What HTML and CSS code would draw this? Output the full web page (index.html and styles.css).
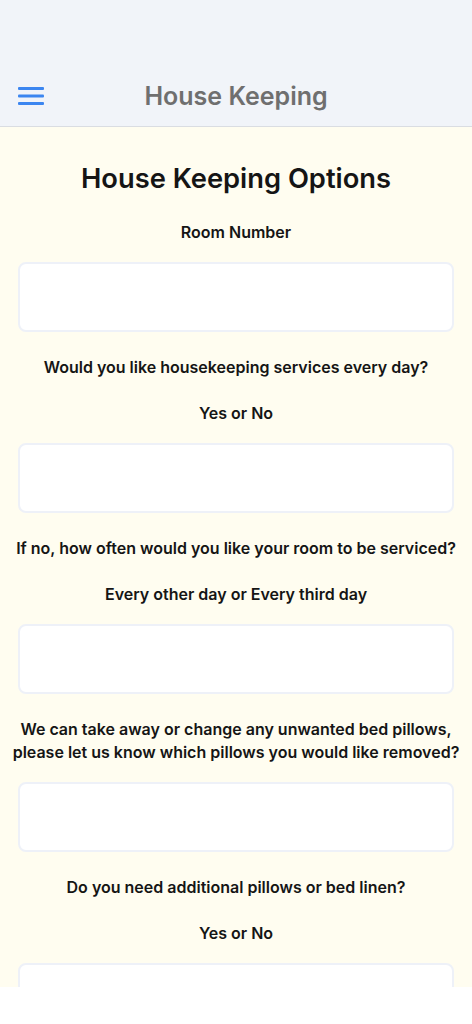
FILE: index.html
```html
<!DOCTYPE html>
<html lang="en">
<head>
    <meta charset="UTF-8">
    <meta name="viewport" content="width=device-width, initial-scale=1.0">
    <title>House Keeping</title>
    <link rel="stylesheet" href="styles.css">
</head>
<body>
    <header class="app-header">
        <div class="toolbar">
            <button class="menu-btn" aria-label="Menu">
                <svg width="28" height="22" viewBox="0 0 28 22">
                    <rect x="1" y="3" width="26" height="3" rx="1"/>
                    <rect x="1" y="10.5" width="26" height="3" rx="1"/>
                    <rect x="1" y="18" width="26" height="3" rx="1"/>
                </svg>
            </button>
            <h1 class="toolbar-title">House Keeping</h1>
            <span></span>
        </div>
    </header>

    <main class="content">
        <h2 class="page-title">House Keeping Options</h2>

        <form class="options-form">
            <p class="label">Room Number</p>
            <input class="field" type="text">

            <p class="label">Would you like housekeeping services every day?</p>
            <p class="label">Yes or No</p>
            <input class="field" type="text">

            <p class="label">If no, how often would you like your room to be serviced?</p>
            <p class="label">Every other day or Every third day</p>
            <input class="field" type="text">

            <p class="label">We can take away or change any unwanted bed pillows, please let us know which pillows you would like removed?</p>
            <input class="field" type="text">

            <p class="label">Do you need additional pillows or bed linen?</p>
            <p class="label">Yes or No</p>
            <input class="field" type="text">
        </form>
    </main>
</body>
</html>
```

FILE: styles.css
```css
body {
    margin: 0;
    font-family: Inter, "Noto Sans", sans-serif;
    background: #fff;
    color: #151515;
}
.app-header {
    background: #f1f4f9;
    padding-top: 64px;
    border-bottom: 1px solid #dadde2;
}
.toolbar {
    height: 62px;
    display: grid;
    grid-template-columns: 1fr auto 1fr;
    align-items: center;
}
.menu-btn {
    justify-self: start;
    margin-left: 17px;
    padding: 0;
    border: none;
    background: none;
    display: flex;
    fill: #3c86f0;
}
.toolbar-title {
    margin: 2px 0 0;
    font-size: 25px;
    font-weight: 600;
    color: #6f6f6f;
}
.content {
    height: 860px;
    overflow: hidden;
    background: #fffdf0;
    padding: 35px 8px 0;
    box-sizing: border-box;
    text-align: center;
}
.page-title {
    margin: 0;
    font-size: 27.3px;
    line-height: 34px;
    font-weight: 600;
}
.options-form {
    display: flex;
    flex-direction: column;
    margin-top: 25px;
}
.label {
    margin: 0 0 17.5px;
    font-size: 16px;
    line-height: 23px;
    font-weight: 600;
}
.label + .label {
    margin-top: 5.5px;
}
.field {
    display: block;
    height: 70px;
    margin: 0 10px 24.5px;
    border: 2px solid #eef1f8;
    border-radius: 8px;
    background: #fff;
    box-sizing: border-box;
}
```
